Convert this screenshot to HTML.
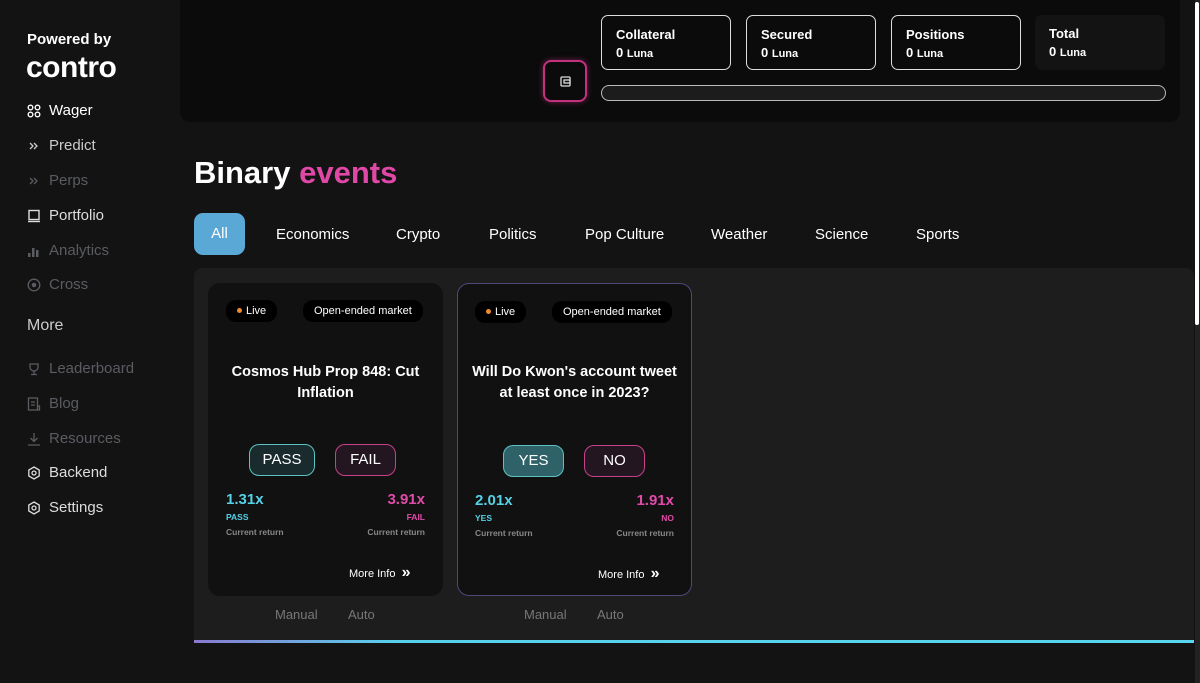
<!DOCTYPE html>
<html><head><meta charset="utf-8"><style>
*{box-sizing:border-box;margin:0;padding:0}
body{width:1200px;height:683px;overflow:hidden;background:#131313;font-family:"Liberation Sans",sans-serif;color:#fff;position:relative}
.side{position:absolute;left:0;top:0;width:180px;height:683px;background:#131313}
.pb{position:absolute;left:27px;top:31px;font-size:15px;font-weight:bold}
.logo{position:absolute;left:26px;top:51px;font-size:30px;font-weight:bold;letter-spacing:-0.5px}
.nav{position:absolute;left:27px;font-size:15px;display:flex;align-items:center}
.nav svg{width:14px;height:14px;margin-right:8px}
.dim{color:#5a5c62}
.top{position:absolute;left:180px;top:0;width:1000px;height:122px;background:#0b0b0b;border-radius:0 0 10px 10px}
.stat{position:absolute;top:15px;width:130px;height:55px;border:1.5px solid #ddd;border-radius:7px;padding:11px 14px;font-size:13px;font-weight:bold}
.stat b{display:block;margin-bottom:3px}
.stat span{font-size:11px}
.bar{position:absolute;left:601px;top:85px;width:565px;height:16px;border:1.5px solid #bbb;border-radius:9px;background:#1c1c1c}
.wallet{position:absolute;left:543px;top:60px;width:44px;height:42px;border:2px solid #c2307f;border-radius:8px;box-shadow:0 0 6px #c2307f88;background:#0b0b0b}
h1{position:absolute;left:194px;top:155px;font-size:31px;font-weight:bold}
h1 span{color:#df48a6}
.tab{position:absolute;top:226px;font-size:15px}
.all{position:absolute;left:194px;top:213px;width:51px;height:42px;border-radius:9px;background:#5aa8d6;font-size:15px;text-align:center;line-height:42px}
.grid{position:absolute;left:194px;top:268px;width:1000px;height:375px;background:#1d1d1d;border-radius:8px 8px 0 0}
.line{position:absolute;left:194px;top:640px;width:1000px;height:3px;background:linear-gradient(90deg,#8a7ad0,#58d0ec 20%,#58d6ee)}
.card{position:absolute;top:283px;width:235px;height:313px;background:#111;border-radius:12px}
.card.sel{border:1px solid #4c4a78}
.pill{position:absolute;top:17px;height:22px;background:#000;border-radius:10px;font-size:11px;line-height:22px;padding:0 11px}
.dot{display:inline-block;width:5px;height:5px;border-radius:50%;background:#f08a30;margin-right:4px;vertical-align:1px}
.q{position:absolute;top:79px;left:0;width:100%;text-align:center;font-size:14.5px;font-weight:bold;line-height:21px}
.btn{position:absolute;top:161px;height:32px;border-radius:10px;font-size:15px;text-align:center;line-height:29px}
.g{border:1.5px solid #5bc3c3;background:#1a2b2e}
.p{border:1.5px solid #c8408a;background:#241621}
.num{position:absolute;top:208px;font-size:15px;font-weight:bold}
.lbl{position:absolute;top:229px;font-size:8.5px;font-weight:bold}
.cr{position:absolute;top:244px;font-size:8.5px;color:#888;font-weight:bold}
.mi{position:absolute;top:281px;font-size:11px}
.ma{position:absolute;top:607px;font-size:13px;color:#777}
</style></head><body>
<div class="side">
<div class="pb">Powered by</div>
<div class="logo">contro</div>
<div class="nav" style="top:102px"><svg viewBox="0 0 14 14" fill="none" stroke="#fff" stroke-width="1.4"><circle cx="3.5" cy="3.5" r="2.3"/><circle cx="10.5" cy="3.5" r="2.3"/><circle cx="3.5" cy="10.5" r="2.3"/><circle cx="10.5" cy="10.5" r="2.3"/></svg>Wager</div>
<div class="nav" style="top:137px;color:#ccc"><svg viewBox="0 0 14 14" fill="none" stroke="#ccc" stroke-width="1.3"><path d="M3 4l3 3-3 3M7 4l3 3-3 3"/></svg>Predict</div>
<div class="nav dim" style="top:172px"><svg viewBox="0 0 14 14" fill="none" stroke="#5a5c62" stroke-width="1.3"><path d="M3 4l3 3-3 3M7 4l3 3-3 3"/></svg>Perps</div>
<div class="nav" style="top:207px;color:#ddd"><svg viewBox="0 0 14 14" fill="none" stroke="#ddd" stroke-width="1.4"><rect x="2" y="1.5" width="10" height="9"/><path d="M1 12.5h12"/></svg>Portfolio</div>
<div class="nav dim" style="top:242px"><svg viewBox="0 0 14 14" fill="#5a5c62"><rect x="1" y="9" width="2.5" height="4"/><rect x="5" y="4" width="2.5" height="9"/><rect x="9" y="6" width="2.5" height="7"/></svg>Analytics</div>
<div class="nav dim" style="top:276px"><svg viewBox="0 0 14 14" fill="none" stroke="#5a5c62" stroke-width="1.3"><circle cx="7" cy="7" r="5.8"/><circle cx="7" cy="7" r="1.6" fill="#5a5c62"/></svg>Cross</div>
<div class="nav" style="top:317px;font-size:16px;color:#ccc">More</div>
<div class="nav dim" style="top:360px"><svg viewBox="0 0 14 14" fill="none" stroke="#5a5c62" stroke-width="1.3"><path d="M3 2h8v3a4 4 0 0 1-8 0zM7 9v3M4 12.5h6"/></svg>Leaderboard</div>
<div class="nav dim" style="top:395px"><svg viewBox="0 0 14 14" fill="none" stroke="#5a5c62" stroke-width="1.3"><rect x="1.5" y="1" width="9" height="12"/><path d="M4 5h4M4 8h4M10.5 9h2v4h-2"/></svg>Blog</div>
<div class="nav dim" style="top:430px"><svg viewBox="0 0 14 14" fill="none" stroke="#5a5c62" stroke-width="1.3"><path d="M7 1v8M3.5 6l3.5 3.5L10.5 6M1 13h12"/></svg>Resources</div>
<div class="nav" style="top:464px;color:#ddd"><svg viewBox="0 0 14 14" fill="none" stroke="#ddd" stroke-width="1.3"><path d="M7 1l5.2 3v6L7 13 1.8 10V4z"/><circle cx="7" cy="7" r="2"/></svg>Backend</div>
<div class="nav" style="top:499px;color:#ddd"><svg viewBox="0 0 14 14" fill="none" stroke="#ddd" stroke-width="1.3"><path d="M7 1l5.2 3v6L7 13 1.8 10V4z"/><circle cx="7" cy="7" r="2"/></svg>Settings</div>
</div>
<div class="top"></div>
<div class="wallet"><svg style="position:absolute;left:15px;top:14px" width="11" height="11" viewBox="0 0 11 11" fill="none" stroke="#ddd" stroke-width="1.3"><rect x="1" y="1" width="9" height="9" rx="1"/><rect x="4" y="4" width="6" height="3"/></svg></div>
<div class="stat" style="left:601px"><b>Collateral</b>0 <span>Luna</span></div>
<div class="stat" style="left:746px"><b>Secured</b>0 <span>Luna</span></div>
<div class="stat" style="left:891px"><b>Positions</b>0 <span>Luna</span></div>
<div class="stat" style="left:1035px;border:none;background:#131313"><b>Total</b>0 <span>Luna</span></div>
<div class="bar"></div>
<h1>Binary <span>events</span></h1>
<div class="all">All</div>
<div class="tab" style="left:276px">Economics</div>
<div class="tab" style="left:396px">Crypto</div>
<div class="tab" style="left:489px">Politics</div>
<div class="tab" style="left:585px">Pop Culture</div>
<div class="tab" style="left:711px">Weather</div>
<div class="tab" style="left:815px">Science</div>
<div class="tab" style="left:916px">Sports</div>
<div class="grid"></div>
<div class="line"></div>
<div class="card" style="left:208px">
<div class="pill" style="left:18px"><span class="dot"></span>Live</div>
<div class="pill" style="left:95px">Open-ended market</div>
<div class="q">Cosmos Hub Prop 848: Cut<br>Inflation</div>
<div class="btn g" style="left:41px;width:66px">PASS</div>
<div class="btn p" style="left:127px;width:61px">FAIL</div>
<div class="num" style="left:18px;color:#55d2e6">1.31x</div>
<div class="num" style="right:18px;color:#e04aa8">3.91x</div>
<div class="lbl" style="left:18px;color:#55d2e6">PASS</div>
<div class="lbl" style="right:18px;color:#e04aa8">FAIL</div>
<div class="cr" style="left:18px">Current return</div>
<div class="cr" style="right:18px">Current return</div>
<div class="mi" style="left:141px">More Info &nbsp;<span style="font-size:16px;font-weight:bold">»</span></div>
</div>
<div class="card sel" style="left:457px">
<div class="pill" style="left:17px"><span class="dot"></span>Live</div>
<div class="pill" style="left:94px">Open-ended market</div>
<div class="q" style="top:78px">Will Do Kwon's account tweet<br>at least once in 2023?</div>
<div class="btn g" style="left:45px;width:61px;background:#2f6168">YES</div>
<div class="btn p" style="left:126px;width:61px">NO</div>
<div class="num" style="left:17px;color:#55d2e6">2.01x</div>
<div class="num" style="right:17px;color:#e04aa8">1.91x</div>
<div class="lbl" style="left:17px;color:#55d2e6">YES</div>
<div class="lbl" style="right:17px;color:#e04aa8">NO</div>
<div class="cr" style="left:17px">Current return</div>
<div class="cr" style="right:17px">Current return</div>
<div class="mi" style="left:140px">More Info &nbsp;<span style="font-size:16px;font-weight:bold">»</span></div>
</div>
<div class="ma" style="left:275px">Manual</div>
<div class="ma" style="left:348px">Auto</div>
<div class="ma" style="left:524px">Manual</div>
<div class="ma" style="left:597px">Auto</div>
<div style="position:absolute;left:1195px;top:0;width:5px;height:683px;background:#222"></div>
<div style="position:absolute;left:1195px;top:2px;width:4px;height:323px;background:#fff;border-radius:2px"></div>
</body></html>
